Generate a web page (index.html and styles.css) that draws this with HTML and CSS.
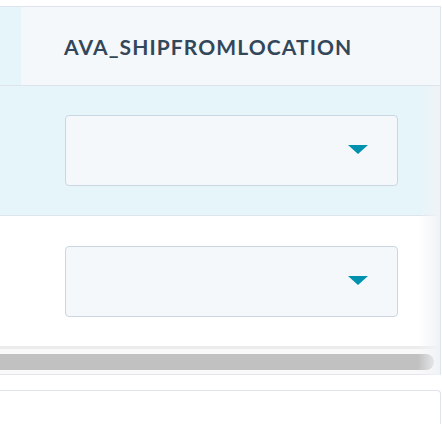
FILE: index.html
```html
<!DOCTYPE html>
<html>
<head>
<meta charset="utf-8">
<link rel="stylesheet" href="styles.css">
</head>
<body>
<div class="table">
  <div class="head">
    <div class="head-stub"></div>
    <div class="head-cell">AVA_SHIPFROMLOCATION</div>
  </div>
  <div class="body">
    <div class="row row-selected">
      <div class="select"><span class="caret"></span></div>
    </div>
    <div class="row">
      <div class="select"><span class="caret"></span></div>
    </div>
    <div class="scrollbar"><div class="thumb"></div></div>
    <div class="fade"></div>
  </div>
</div>
<div class="next-box"></div>
</body>
</html>
```
FILE: styles.css
```css
html, body {
  margin: 0;
  padding: 0;
  background: #ffffff;
  font-family: "Lato", "Liberation Sans", sans-serif;
}
.table {
  margin-top: 6px;
  width: 440px;
  border-top: 1px solid #dfe3eb;
  border-right: 1px solid #dfe3eb;
}
.head {
  display: flex;
  height: 78px;
  border-bottom: 1px solid #dfe3eb;
}
.head-stub {
  width: 21px;
  background: #e5f5fa;
}
.head-cell {
  flex: 1;
  background: #f5f8fa;
  display: flex;
  align-items: center;
  padding-left: 43px;
  padding-top: 1px;
  color: #33475b;
  font-weight: 700;
  font-size: 21px;
  letter-spacing: 1.1px;
}
.body {
  position: relative;
}
.row {
  height: 130px;
  box-sizing: border-box;
  padding: 29px 0 0 65px;
  border-bottom: 1px solid #dfe3eb;
  background: #ffffff;
}
.row-selected {
  background: #e5f5fa;
}
.row + .row {
  border-bottom: none;
  padding-top: 30px;
}
.select {
  width: 333px;
  height: 71px;
  box-sizing: border-box;
  border: 1px solid #cbd6e2;
  border-radius: 4px;
  background: #f5f8fa;
  display: flex;
  align-items: center;
  justify-content: flex-end;
  padding-right: 29px;
}
.caret {
  width: 0;
  height: 0;
  border-left: 10px solid transparent;
  border-right: 10px solid transparent;
  border-top: 9px solid #0091ae;
  margin-top: -2px;
}
.scrollbar {
  height: 29px;
  box-sizing: border-box;
  border-top: 3px solid #ececec;
  border-bottom: 1px solid #e3e5ee;
  background: #f9f9f9;
  padding: 5px 6px 0 0;
}
.thumb {
  height: 16px;
  background: #c1c1c1;
  border-radius: 0 8px 8px 0;
}
.fade {
  position: absolute;
  top: 0;
  right: 0;
  width: 22px;
  bottom: 0;
  background: linear-gradient(to right, rgba(240, 243, 246, 0), rgba(240, 243, 246, 1));
  pointer-events: none;
}
.next-box {
  margin-top: 15px;
  width: 441px;
  height: 34px;
  box-sizing: border-box;
  border-top: 1px solid #dfe3eb;
  border-right: 1px solid #dfe3eb;
  border-top-right-radius: 4px;
}
```
